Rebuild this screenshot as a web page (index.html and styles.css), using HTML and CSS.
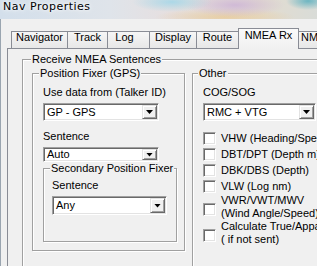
FILE: index.html
```html
<!DOCTYPE html>
<html lang="en">
<head>
<meta charset="UTF-8">
<title>Nav Properties</title>
<link rel="stylesheet" href="styles.css">
</head>
<body>
<div class="window">
  <div class="titlebar">Nav Properties</div>
  <div class="client">
    <div class="tabs">
      <div class="tab">Navigator</div>
      <div class="tab">Track</div>
      <div class="tab">Log</div>
      <div class="tab">Display</div>
      <div class="tab">Route</div>
      <div class="tab active">NMEA Rx</div>
      <div class="tab">NMEA Tx</div>
    </div>
    <div class="panel">
      <fieldset class="group receive">
        <legend>Receive NMEA Sentences</legend>
        <div class="columns">
          <fieldset class="group fixer">
            <legend>Position Fixer (GPS)</legend>
            <div class="body">
              <div class="label">Use data from (Talker ID)</div>
              <div class="combo"><span class="value">GP - GPS</span><span class="drop"></span></div>
              <div class="label gap">Sentence</div>
              <div class="combo short"><span class="value">Auto</span><span class="drop"></span></div>
              <fieldset class="group secondary">
                <legend>Secondary Position Fixer</legend>
                <div class="body">
                  <div class="label">Sentence</div>
                  <div class="combo any"><span class="value">Any</span><span class="drop"></span></div>
                </div>
              </fieldset>
            </div>
          </fieldset>
          <fieldset class="group other">
            <legend>Other</legend>
            <div class="body">
              <div class="label">COG/SOG</div>
              <div class="combo wide"><span class="value">RMC + VTG</span><span class="drop"></span></div>
              <div class="checks">
                <div class="check"><span class="box"></span><span>VHW (Heading/Speed)</span></div>
                <div class="check"><span class="box"></span><span>DBT/DPT (Depth m)</span></div>
                <div class="check"><span class="box"></span><span>DBK/DBS (Depth)</span></div>
                <div class="check"><span class="box"></span><span>VLW (Log nm)</span></div>
                <div class="check multi"><span class="box"></span><span>VWR/VWT/MWV<br>(Wind Angle/Speed)</span></div>
                <div class="check multi"><span class="box"></span><span>Calculate True/Apparent<br>( if not sent)</span></div>
              </div>
            </div>
          </fieldset>
        </div>
      </fieldset>
    </div>
  </div>
</div>
</body>
</html>
```

FILE: styles.css
```css
html, body { margin: 0; width: 317px; height: 266px; overflow: hidden; }
body { font: 11px "Liberation Sans", Arial, sans-serif; color: #000; background: #f0f0f0; }
.window { width: 420px; }

/* aero title bar, blurred desktop behind it */
.titlebar {
  height: 19px;
  padding-left: 3px;
  font: 11px "DejaVu Sans", sans-serif;
  line-height: 13px;
  letter-spacing: 0.5px;
  color: #000;
  text-shadow: 0 0 6px #fff, 0 0 3px #fff;
  background:
    radial-gradient(ellipse 22px 9px at 308px 1px, rgba(90, 175, 190, 0.85), transparent),
    radial-gradient(ellipse 40px 10px at 172px 2px, rgba(165, 215, 232, 0.9), transparent),
    radial-gradient(ellipse 50px 12px at 235px 5px, rgba(205, 180, 215, 0.85), transparent),
    radial-gradient(ellipse 70px 9px at 225px 17px, rgba(232, 205, 160, 0.9), transparent),
    linear-gradient(90deg, #d3dfeb 0, #dfe4ea 110px, #e6dfe0 170px, #e3dccf 260px, #d9dcd8 317px);
}

.client { border-left: 1px solid #9aa5b0; padding-top: 9px; }

.tabs { display: flex; align-items: flex-start; margin-left: 10px; }
.tab {
  box-sizing: border-box;
  height: 17px;
  margin-top: 3px;
  margin-left: -1px;
  border: 1px solid #898c95;
  border-bottom: 0;
  background: linear-gradient(#f6f6f6, #e7e7e7);
  text-align: center;
  line-height: 11px;
  white-space: nowrap;
}
.tab:first-child { margin-left: 0; }
.tab:nth-child(1) { width: 57px; }
.tab:nth-child(2) { width: 41px; }
.tab:nth-child(3) { width: 43px; padding-right: 8px; }
.tab:nth-child(4) { width: 48px; }
.tab:nth-child(5) { width: 43px; }
.tab:nth-child(6) { width: 61px; }
.tab:nth-child(7) { width: 60px; text-align: left; padding-left: 2px; }
.tab.active {
  position: relative;
  z-index: 1;
  height: 21px;
  margin-top: 0;
  margin-bottom: -1px;
  padding-top: 1px;
  background: linear-gradient(#fafafa, #f0f0f0);
}

.panel { height: 260px; margin-left: 6px; border: 1px solid #898c95; padding: 4px 0 0 14px; }

/* etched group boxes */
fieldset.group {
  box-sizing: border-box;
  margin: 0;
  padding: 0;
  min-width: 0;
  border: 1px solid #a0a0a0;
  box-shadow: inset 1px 1px #fff, 1px 1px #fff;
}
legend { padding: 0 1px; line-height: 13px; background: #f0f0f0; white-space: nowrap; }
.receive { width: 330px; height: 240px; }
.receive > legend { margin-left: 8px; }
.fixer > legend, .secondary > legend { margin-left: 6px; }
.other > legend { margin-left: 5px; }

.columns { display: flex; align-items: flex-start; gap: 7px; padding: 1px 0 0 9px; }
.fixer { width: 153px; flex: none; }
.fixer > .body { padding: 6px 7px 8px 10px; }
.secondary { margin: 6px 0 0 -2px; }
.secondary > .body { padding: 4px 0 26px 8px; }
.other { width: 170px; flex: none; }
.other > .body { padding: 6px 0 40px 10px; }

.label { line-height: 13px; white-space: nowrap; }
.label.gap { margin-top: 9px; }

/* sunken combo box with classic drop button */
.combo {
  box-sizing: border-box;
  display: flex;
  width: 116px;
  height: 18px;
  margin-top: 4px;
  padding: 1px;
  line-height: 14px;
  background: #fff;
  border: 1px solid;
  border-color: #a0a0a0 #fff #fff #a0a0a0;
  box-shadow: inset 1px 1px #696969, inset -1px -1px #e3e3e3;
}
.combo.short { height: 15px; line-height: 11px; }
.combo.any { width: 115px; height: 19px; line-height: 15px; }
.combo.wide { width: 113px; }
.value { flex: 1; padding-left: 2px; white-space: nowrap; }
.drop {
  box-sizing: border-box;
  width: 15px;
  flex: none;
  display: flex;
  align-items: center;
  justify-content: center;
  background: #f0f0f0;
  border: 1px solid;
  border-color: #e3e3e3 #696969 #696969 #e3e3e3;
  box-shadow: inset 1px 1px #fff, inset -1px -1px #a0a0a0;
}
.drop::after {
  content: "";
  width: 7px;
  height: 4px;
  background: #000;
  clip-path: polygon(0 0, 100% 0, 50% 100%);
}

.checks { margin-top: 9px; }
.check { display: flex; align-items: center; gap: 5px; height: 16px; line-height: 16px; white-space: nowrap; }
.check.multi { height: 26px; line-height: 13px; }
.box {
  box-sizing: border-box;
  flex: none;
  width: 13px;
  height: 13px;
  background: #fff;
  border: 1px solid;
  border-color: #a0a0a0 #fff #fff #a0a0a0;
  box-shadow: inset 1px 1px #696969, inset -1px -1px #e3e3e3;
}
.check.multi .box { margin-top: 4px; }
```
